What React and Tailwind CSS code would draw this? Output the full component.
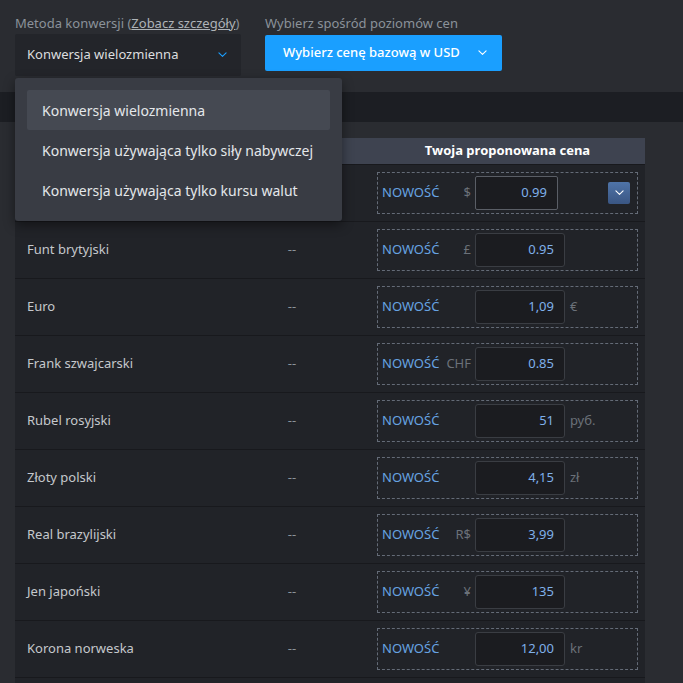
import React from "react";

const rows = [
  { name: "", dash: false, pre: "$", val: "0.99", suf: "", first: true },
  { name: "Funt brytyjski", dash: true, pre: "£", val: "0.95", suf: "" },
  { name: "Euro", dash: true, pre: "", val: "1,09", suf: "€" },
  { name: "Frank szwajcarski", dash: true, pre: "CHF", val: "0.85", suf: "" },
  { name: "Rubel rosyjski", dash: true, pre: "", val: "51", suf: "руб." },
  { name: "Złoty polski", dash: true, pre: "", val: "4,15", suf: "zł" },
  { name: "Real brazylijski", dash: true, pre: "R$", val: "3,99", suf: "" },
  { name: "Jen japoński", dash: true, pre: "¥", val: "135", suf: "" },
  { name: "Korona norweska", dash: true, pre: "", val: "12,00", suf: "kr" },
];

function Chevron({ className, color = "currentColor", w = 10 }) {
  return (
    <svg className={className} width={w} height={w * 0.6} viewBox="0 0 10 6" fill="none">
      <polyline points="1,1 5,5 9,1" stroke={color} strokeWidth="1.2" strokeLinecap="round" strokeLinejoin="round" />
    </svg>
  );
}

export default function App() {
  return (
    <div
      className="relative h-[683px] w-full overflow-hidden bg-[#2a2c31]"
      style={{ fontFamily: '"Noto Sans", "Open Sans", sans-serif' }}
    >
      {/* top controls */}
      <div className="flex h-[92px] gap-[24px] px-[15px] pt-[14px]">
        <div className="flex flex-col">
          <div className="text-[13px] leading-[18px] text-[#8b929a]">
            Metoda konwersji (<span className="text-[#aeb3b8] underline">Zobacz szczegóły</span>)
          </div>
          <div className="mt-[2px] flex h-[42px] w-[226px] items-center justify-between rounded-[2px] bg-[#23252a] pl-[12px] pr-[14px]">
            <span className="text-[13px] text-[#dcdedf]">Konwersja wielozmienna</span>
            <Chevron color="#1a9fff" w={9} />
          </div>
        </div>
        <div className="flex flex-col">
          <div className="text-[13px] leading-[18px] text-[#8b929a]">Wybierz spośród poziomów cen</div>
          <div className="mt-[3px] flex h-[36px] w-[237px] items-center rounded-[2px] bg-[#1a9fff] pl-[18px]">
            <span className="text-[13px] font-medium text-white">Wybierz cenę bazową w USD</span>
            <Chevron className="ml-[18px]" color="#ffffff" w={9} />
          </div>
        </div>
      </div>

      {/* dark band */}
      <div className="h-[30px] bg-[#1c1e23]" />

      {/* table */}
      <div className="pt-[16px] pl-[15px]">
        <div className="w-[630px] bg-[#18191d]">
          <div className="flex h-[26px] items-center bg-[#3e4350] text-[13px] font-bold text-white">
            <div className="w-[337px]" />
            <div className="flex-1 pl-[25px] pr-[7px] text-center">Twoja proponowana cena</div>
          </div>
          <div className="flex flex-col gap-px pt-px">
            {rows.map((r, i) => (
              <div key={i} className="flex h-[56px] items-center bg-[#212328]">
                <div className="w-[217px] pl-[12px] text-[13px] text-[#c5c8cc]">{r.name}</div>
                <div className="w-[120px] text-center text-[13px] text-[#8b929a]">{r.dash ? "--" : ""}</div>
                <div className="flex-1 pl-[25px] pr-[7px]">
                  <div className="flex h-[42px] items-center border border-dashed border-[#646b77] pl-[4px]">
                    <span className="w-[62px] text-[13px] text-[#67a3e2]">NOWOŚĆ</span>
                    <span className="w-[27px] text-right text-[13px] text-[#6b7179]">{r.pre}</span>
                    <div
                      className={
                        r.first
                          ? "ml-[4px] flex h-[34px] w-[83px] items-center justify-end rounded-[2px] border border-[#5a5e66] bg-[#1b1c20] pr-[10px]"
                          : "ml-[4px] flex h-[34px] w-[90px] items-center justify-end rounded-[3px] border border-[#3a3d43] bg-[#1b1c20] pr-[10px]"
                      }
                    >
                      <span className="text-[13px] text-[#7fb0ea]">{r.val}</span>
                    </div>
                    {r.suf && <span className="ml-[5px] text-[13px] text-[#6b7179]">{r.suf}</span>}
                    {r.first && (
                      <div className="ml-auto mr-[7px] flex h-[22px] w-[22px] items-center justify-center rounded-[2px] bg-gradient-to-b from-[#4f74a8] to-[#3a5683]">
                        <Chevron color="#ffffff" w={9} />
                      </div>
                    )}
                  </div>
                </div>
              </div>
            ))}
            <div className="h-[56px] bg-[#212328]" />
          </div>
        </div>
      </div>

      {/* dropdown menu */}
      <div className="absolute left-[15px] top-[78px] w-[327px] rounded-[3px] bg-[#393c44] p-[12px] pb-[11px] shadow-[0_4px_12px_rgba(0,0,0,0.45)]">
        <div className="flex h-[40px] items-center rounded-[2px] bg-[#454952] pl-[15px] text-[14px] text-[#e4e7ea]">
          Konwersja wielozmienna
        </div>
        <div className="flex h-[40px] items-center pl-[15px] text-[14px] text-[#e4e7ea]">
          Konwersja używająca tylko siły nabywczej
        </div>
        <div className="flex h-[40px] items-center pl-[15px] text-[14px] text-[#e4e7ea]">
          Konwersja używająca tylko kursu walut
        </div>
      </div>
    </div>
  );
}
